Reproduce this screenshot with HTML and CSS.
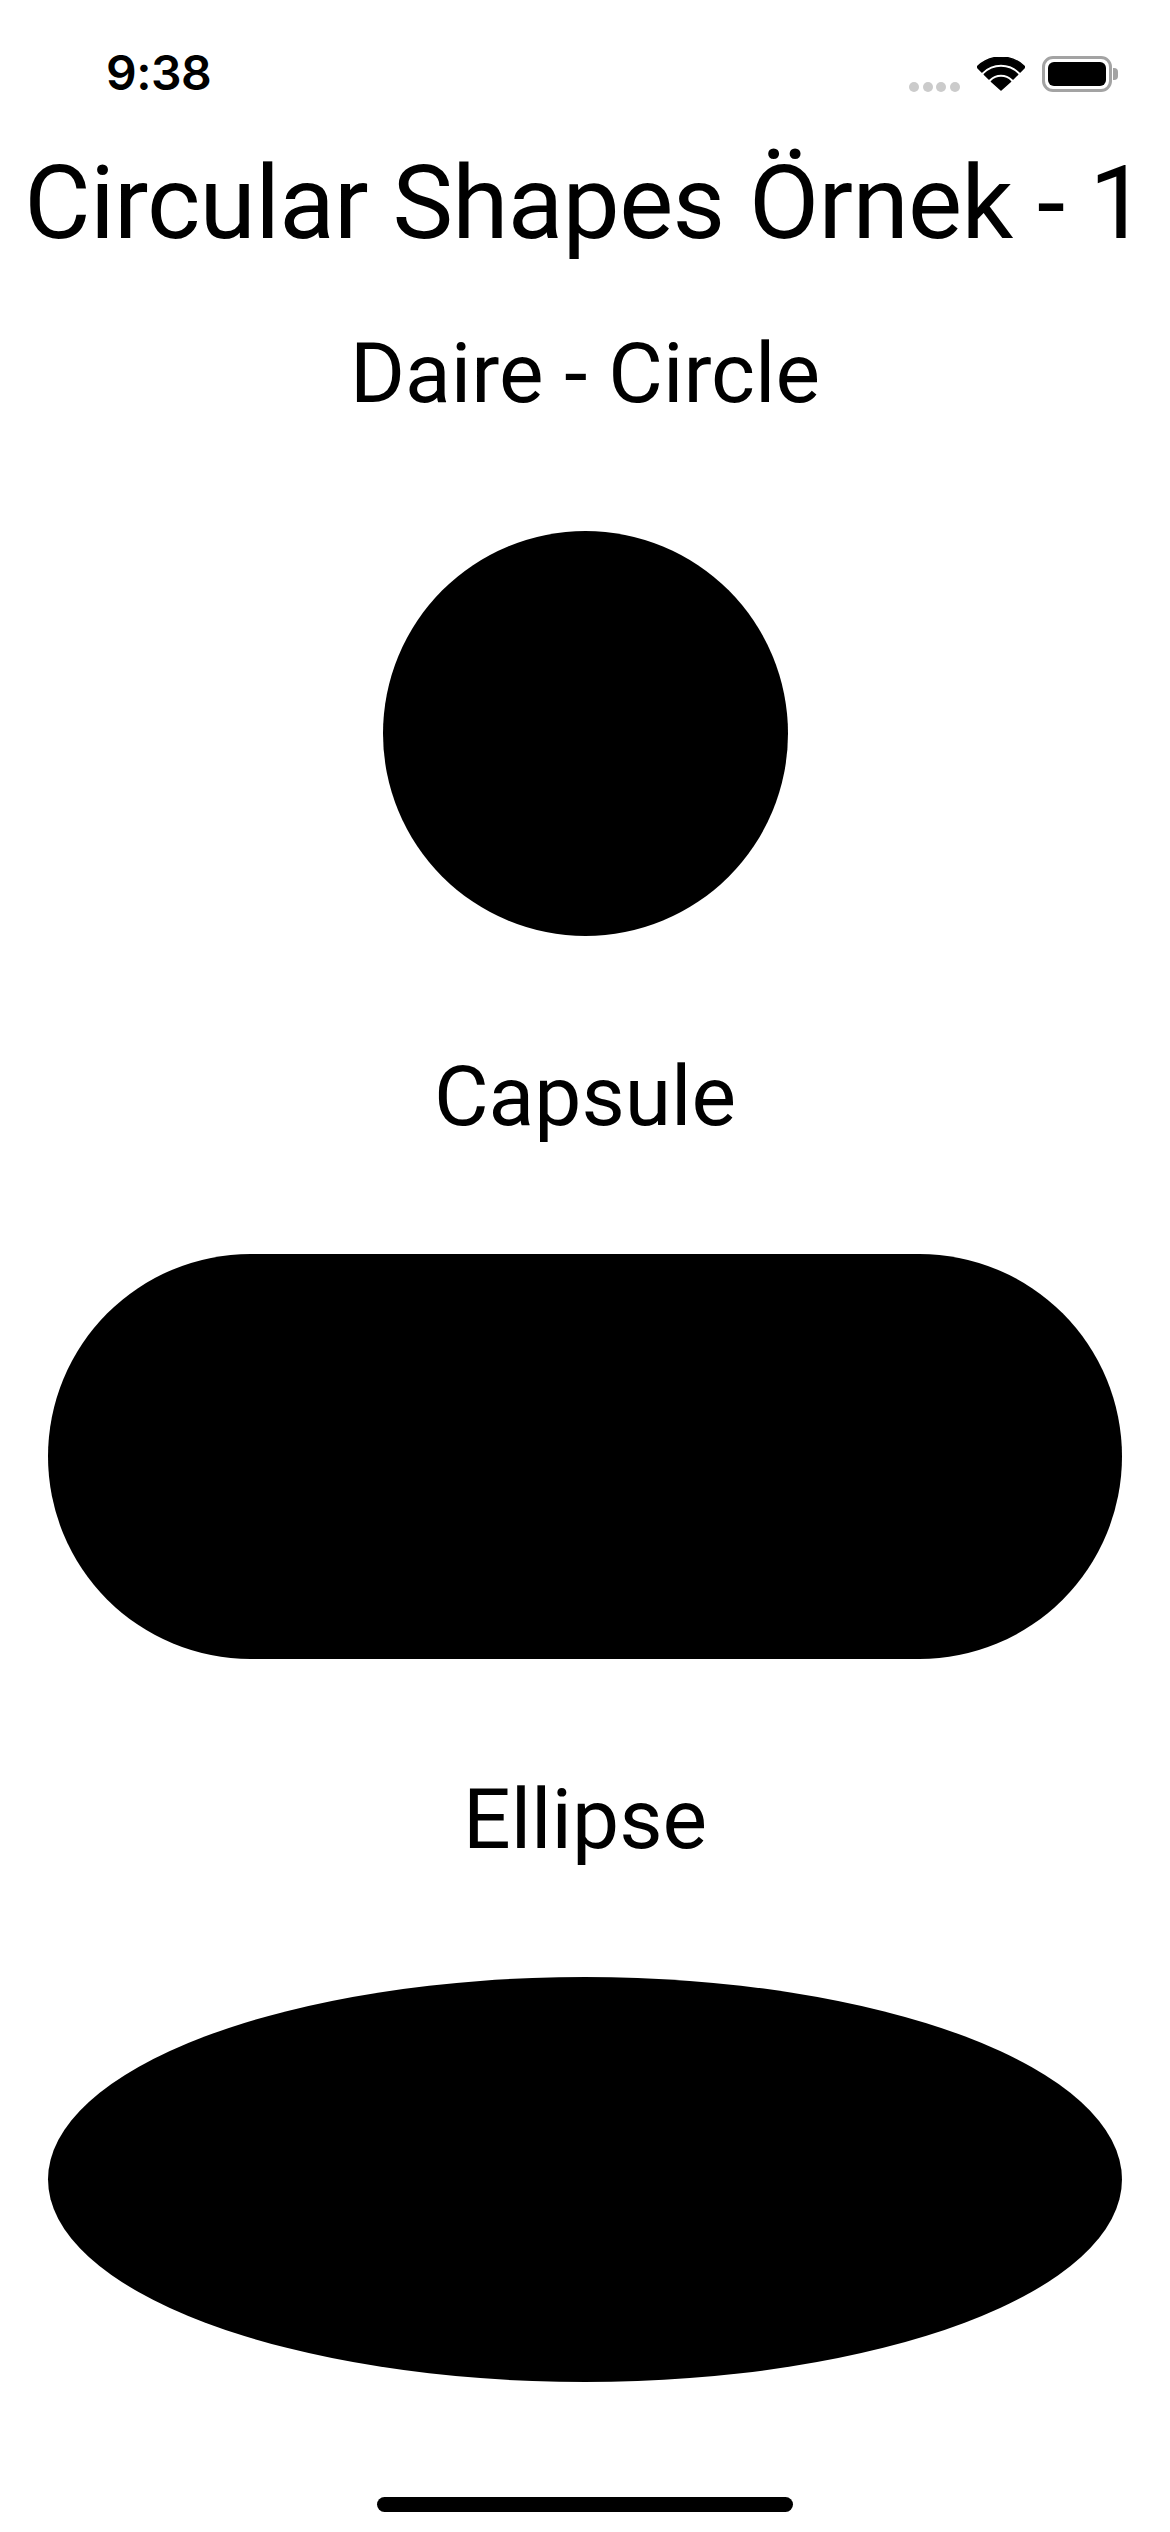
FILE: index.html
```html
<!DOCTYPE html>
<html lang="tr">
<head>
<meta charset="utf-8">
<title>Circular Shapes Örnek - 1</title>
<link rel="stylesheet" href="styles.css">
</head>
<body>
<div class="screen">
  <header class="status-bar">
    <span class="time">9:38</span>
    <div class="status-icons">
      <div class="signal">
        <span class="dot"></span><span class="dot"></span><span class="dot"></span><span class="dot"></span>
      </div>
      <svg class="wifi" width="48" height="34" viewBox="0 0 48 34">
        <path d="M0 10 A34 34 0 0 1 48 10 L43.09 14.91 A27 27 0 0 0 4.91 14.91 Z" fill="#000" stroke="#000" stroke-width="1.5" stroke-linejoin="round"/>
        <path d="M7.38 17.38 A23.5 23.5 0 0 1 40.62 17.38 L36.02 21.98 A17 17 0 0 0 11.98 21.98 Z" fill="#000" stroke="#000" stroke-width="1.5" stroke-linejoin="round"/>
        <path d="M24 33 L14.45 24.45 A13.5 13.5 0 0 1 33.55 24.45 Z" fill="#000" stroke="#000" stroke-width="1.5" stroke-linejoin="round"/>
      </svg>
      <div class="battery">
        <div class="battery-body"><div class="battery-level"></div></div>
        <div class="battery-cap"></div>
      </div>
    </div>
  </header>

  <main class="content">
    <h1 class="title">Circular Shapes Örnek - 1</h1>

    <section class="section section-first">
      <h2 class="label">Daire - Circle</h2>
      <div class="shape circle"></div>
    </section>

    <section class="section">
      <h2 class="label">Capsule</h2>
      <div class="shape capsule"></div>
    </section>

    <section class="section">
      <h2 class="label">Ellipse</h2>
      <div class="shape ellipse"></div>
    </section>
  </main>

  <div class="home-indicator"></div>
</div>
</body>
</html>
```

FILE: styles.css
```css
* {
  box-sizing: border-box;
}

html, body {
  margin: 0;
  padding: 0;
  background: #ffffff;
}

body {
  font-family: Roboto, "Noto Sans", "Liberation Sans", sans-serif;
  color: #000;
}

.screen {
  width: 1170px;
  height: 2532px;
  display: flex;
  flex-direction: column;
  overflow: hidden;
}

/* Status bar */
.status-bar {
  height: 150px;
  display: flex;
  align-items: flex-start;
  justify-content: space-between;
  padding: 0 52px 0 106px;
}

.time {
  margin-top: 46px;
  font-family: Inter, Roboto, sans-serif;
  font-size: 48px;
  line-height: 54px;
  font-weight: 600;
  letter-spacing: -0.5px;
}

.status-icons {
  margin-top: 56px;
  display: flex;
  align-items: flex-start;
}

.signal {
  margin-top: 26px;
  display: flex;
  gap: 3.6px;
}

.dot {
  width: 10px;
  height: 10px;
  border-radius: 50%;
  background: #cbcbcb;
}

.wifi {
  margin-left: 17px;
  margin-top: 1px;
  display: block;
}

.battery {
  margin-left: 17px;
  display: flex;
  align-items: center;
}

.battery-body {
  width: 70px;
  height: 36px;
  border: 3px solid #a3a3a3;
  border-radius: 11px;
  padding: 3px;
}

.battery-level {
  width: 100%;
  height: 100%;
  background: #000;
  border-radius: 6px;
}

.battery-cap {
  width: 5px;
  height: 12px;
  margin-left: 1px;
  background: #a3a3a3;
  border-radius: 0 4px 4px 0;
}

/* Content */
.content {
  display: flex;
  flex-direction: column;
  align-items: center;
}

.title {
  margin: 0;
  font-size: 102px;
  line-height: 106px;
  font-weight: 400;
  letter-spacing: -0.7px;
  white-space: nowrap;
  text-align: center;
}

.section {
  width: 100%;
  display: flex;
  flex-direction: column;
  align-items: center;
  gap: 113px;
  margin-top: 117px;
  padding: 0 48px;
}

.section-first {
  margin-top: 74px;
}

.label {
  margin: 0;
  font-size: 84px;
  line-height: 88px;
  font-weight: 400;
  letter-spacing: 0;
  text-align: center;
}

.shape {
  background: #000;
  height: 405px;
}

.circle {
  width: 405px;
  border-radius: 50%;
}

.capsule {
  width: 100%;
  border-radius: 202.5px;
}

.ellipse {
  width: 100%;
  border-radius: 50%;
}

.home-indicator {
  margin: auto auto 20px;
  width: 416px;
  height: 15px;
  border-radius: 8px;
  background: #000;
}
```
